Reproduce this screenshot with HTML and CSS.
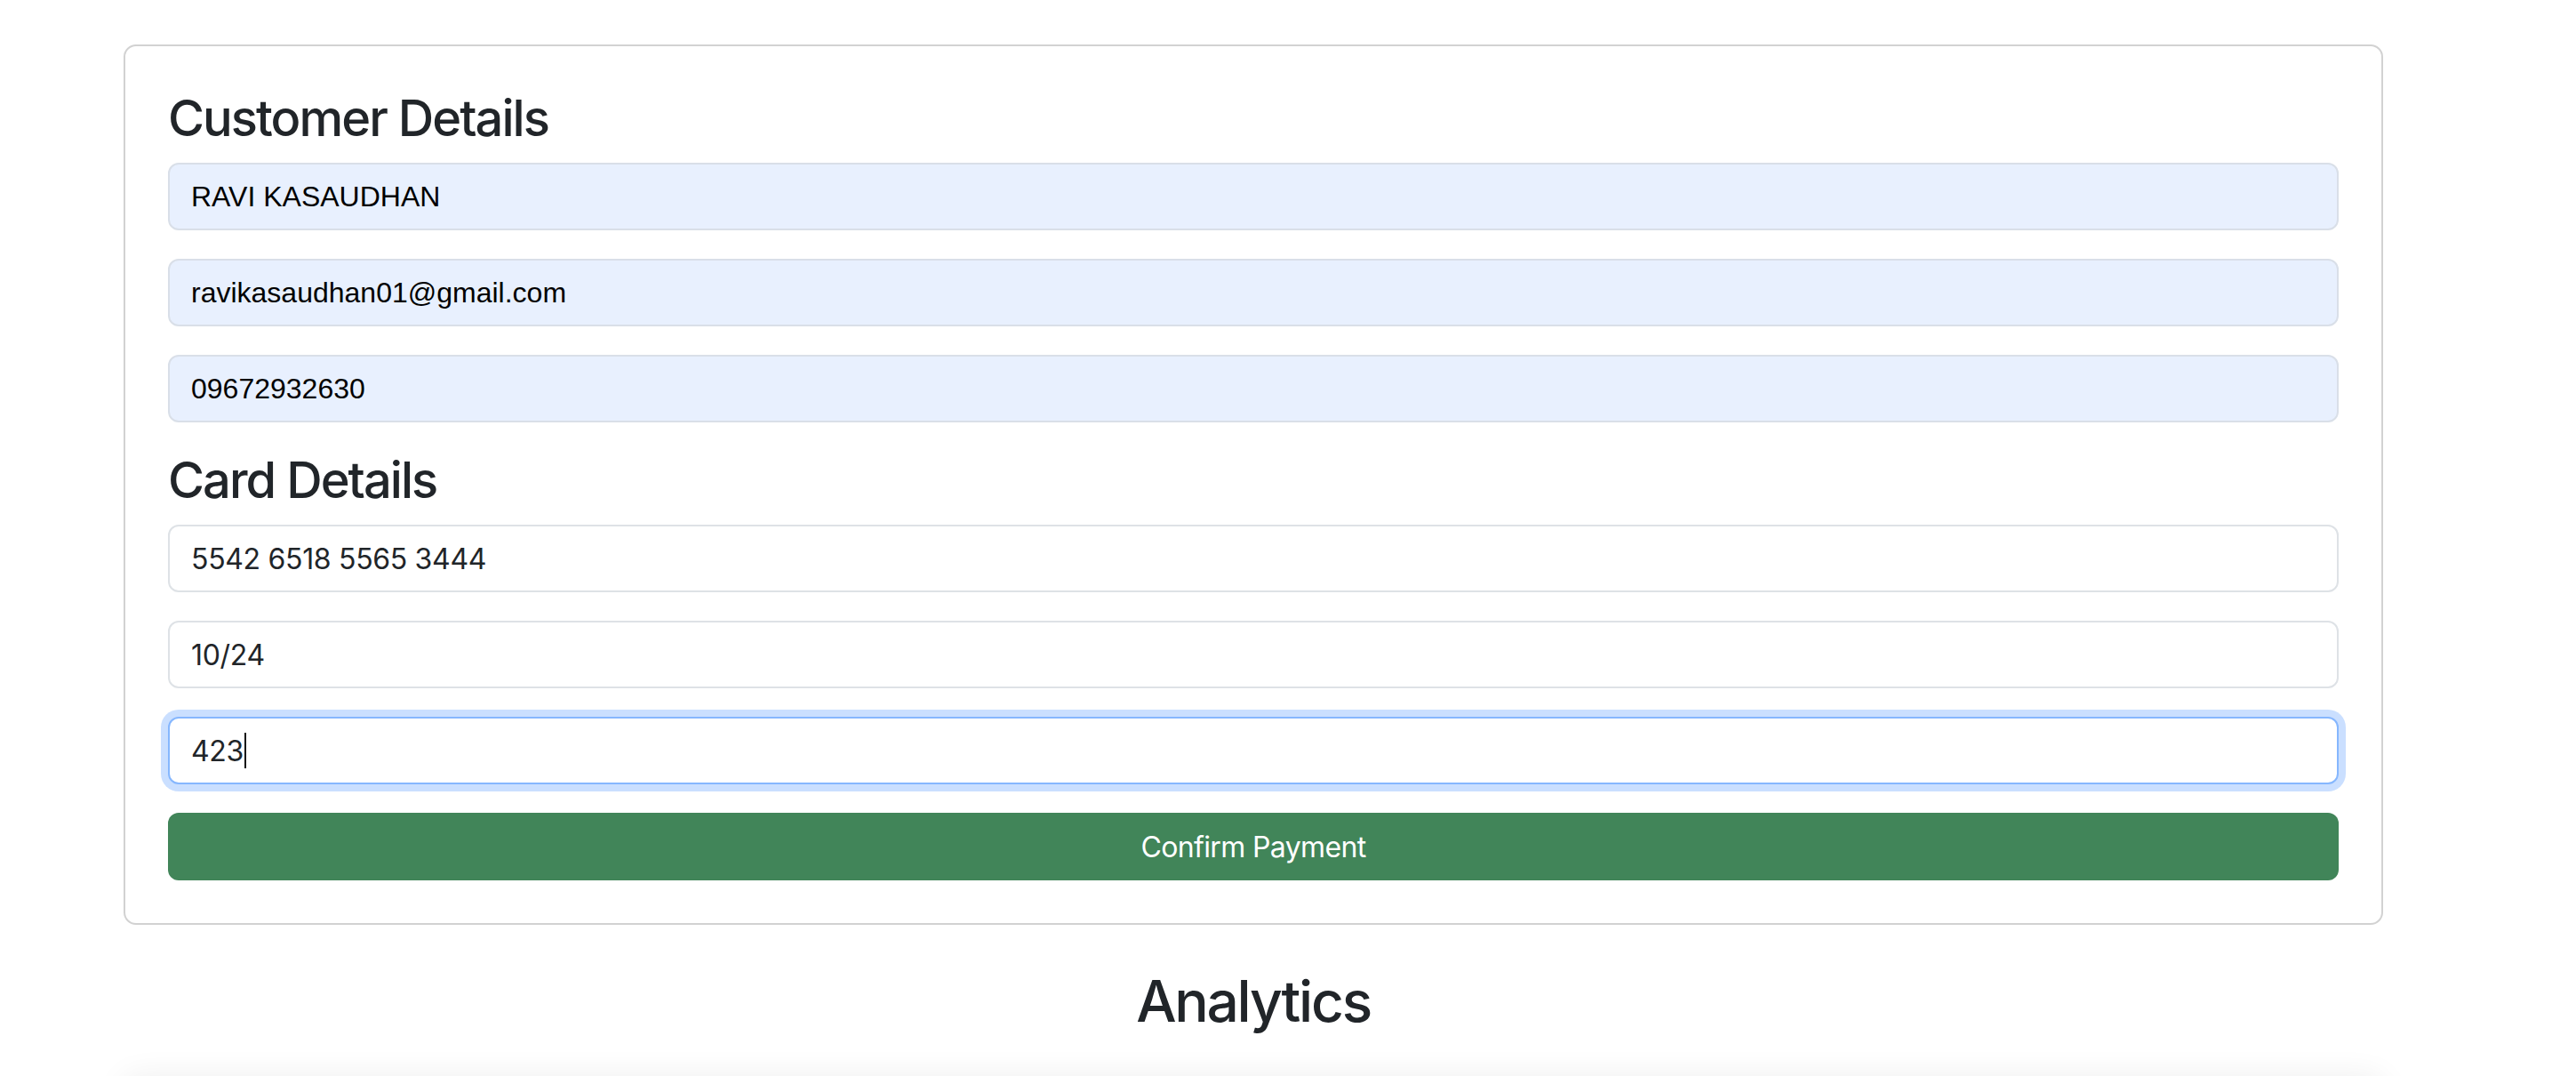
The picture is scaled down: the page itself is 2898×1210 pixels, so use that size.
FILE: index.html
```html
<!DOCTYPE html>
<html lang="en">
<head>
<meta charset="utf-8">
<title>Payment</title>
<link rel="stylesheet" href="styles.css">
</head>
<body>
<main class="page">
  <section class="card">
    <h3 class="section-title">Customer Details</h3>
    <div class="field field-autofill"><span class="autofill-text">RAVI KASAUDHAN</span></div>
    <div class="field field-autofill"><span class="autofill-text">ravikasaudhan01@gmail.com</span></div>
    <div class="field field-autofill"><span class="autofill-text">09672932630</span></div>

    <h3 class="section-title">Card Details</h3>
    <div class="field"><span class="value">5542 6518 5565 3444</span></div>
    <div class="field"><span class="value">10/24</span></div>
    <div class="field field-focus"><span class="value">423</span><span class="caret"></span></div>

    <button class="btn-confirm" type="button">Confirm Payment</button>
  </section>

  <h2 class="analytics-title">Analytics</h2>
  <div class="analytics-panel"></div>
</main>
</body>
</html>
```

FILE: styles.css
```css
html, body {
  margin: 0;
  padding: 0;
  background: #ffffff;
  overflow: hidden;
}

body {
  font-family: Inter, "Noto Sans", "Liberation Sans", sans-serif;
  color: #212529;
}

.page {
  width: 2542px;
  margin: 50px 0 0 139px;
}

.card {
  box-sizing: border-box;
  border: 2px solid #d2d2d2;
  border-radius: 14px;
  padding: 48px;
  background: #fff;
}

.section-title {
  margin: 0 0 16px;
  font-size: 56px;
  line-height: 1.2;
  font-weight: 500;
  letter-spacing: -0.035em;
  color: #212529;
}

.field {
  box-sizing: border-box;
  height: 76px;
  margin-bottom: 32px;
  border: 2px solid #dee2e6;
  border-radius: 12px;
  padding: 0 24px;
  display: flex;
  align-items: center;
  background: #fff;
  font-size: 32px;
  color: #212529;
}

.field-autofill {
  background: #e8f0fe;
  border-color: #d9dfe8;
}

.autofill-text {
  font-family: "Liberation Sans", Arial, sans-serif;
  font-size: 32px;
  color: #000;
}

.value {
  font-family: Inter, "Noto Sans", sans-serif;
  font-size: 32px;
  letter-spacing: -0.01em;
  color: #212529;
}

.field-focus {
  border-color: #86b7fe;
  box-shadow: 0 0 0 8px rgba(13, 110, 253, 0.22);
}

.caret {
  display: inline-block;
  width: 2px;
  height: 40px;
  margin-left: 1px;
  background: #111;
}

.btn-confirm {
  display: block;
  box-sizing: border-box;
  width: 100%;
  height: 76px;
  border: 0;
  border-radius: 12px;
  background: #418559;
  color: #ffffff;
  font-family: Inter, "Noto Sans", sans-serif;
  font-size: 32px;
  font-weight: 400;
  letter-spacing: -0.02em;
  padding: 0;
}

.analytics-title {
  margin: 48px 0 16px;
  text-align: center;
  font-size: 64px;
  line-height: 1.2;
  font-weight: 500;
  letter-spacing: -0.035em;
  color: #212529;
}

.analytics-panel {
  height: 300px;
  margin-top: 46px;
  border-radius: 14px;
  background: #fff;
  box-shadow: 0 0 36px rgba(0, 0, 0, 0.07);
}
```
